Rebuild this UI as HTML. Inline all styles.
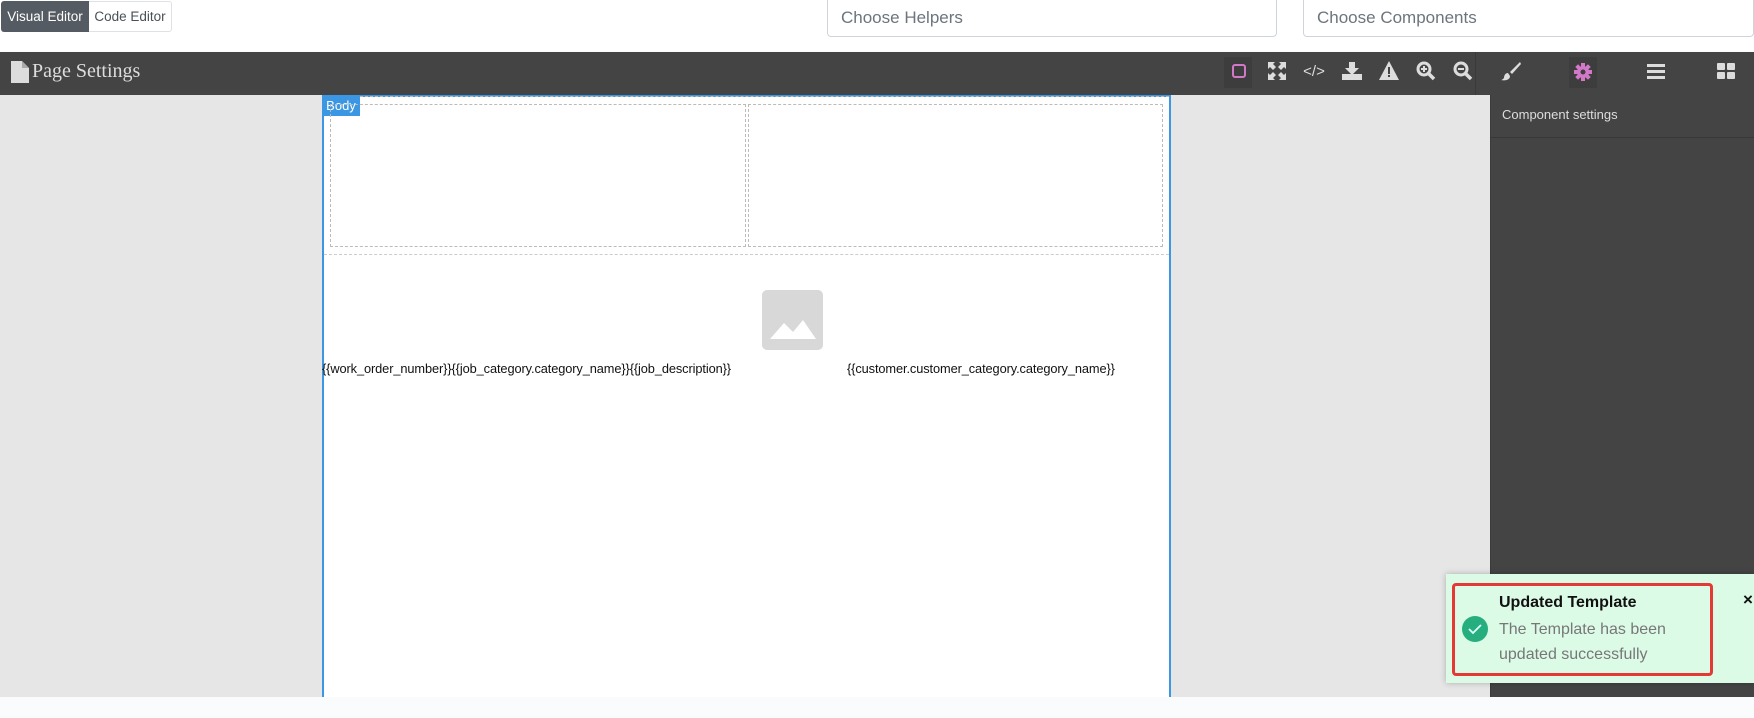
<!DOCTYPE html>
<html><head><style>
*{box-sizing:border-box;margin:0;padding:0}
body{width:1754px;height:718px;background:#fafbfd;position:relative;overflow:hidden;font-family:"Liberation Sans",sans-serif}
.abs{position:absolute;white-space:nowrap}
.top{left:0;top:0;width:1754px;height:51px;background:#fff}
.btn{top:1px;height:31px;font-size:14px;line-height:31px;text-align:center}
.inp{top:0;height:37px;border:1px solid #ced4da;border-top:none;border-radius:0 0 4px 4px;font-size:17px;color:#6c757d;line-height:36px;padding-left:13px;background:#fff}
.ic{color:#ddd;font-size:18px;top:60px;width:26px;text-align:center}
</style></head><body>
<div class="abs top"></div>
<div class="abs btn" style="left:1px;width:88px;background:#545b62;color:#fff;border-radius:3px 0 0 3px;font-size:13.5px">Visual Editor</div>
<div class="abs btn" style="left:89px;width:83px;color:#495057;border:1px solid #dee2e6;border-left:none;border-radius:0 3px 3px 0;line-height:29px;font-size:13.5px">Code Editor</div>
<div class="abs inp" style="left:827px;width:450px">Choose Helpers</div>
<div class="abs inp" style="left:1303px;width:451px">Choose Components</div>

<div class="abs" style="left:0;top:52px;width:1754px;height:43px;background:#444"></div>
<div class="abs" style="left:0;top:95px;width:1490px;height:602px;background:#e6e6e6"></div>
<div class="abs" style="left:1490px;top:95px;width:264px;height:602px;background:#444;border-left:1px solid #3a3a3a"></div>
<div class="abs" style="left:1490px;top:137px;width:264px;height:1px;background:#383838"></div>
<div class="abs" style="left:1502px;top:107px;color:#ddd;font-size:13px">Component settings</div>
<div class="abs" style="left:1475px;top:52px;width:1px;height:43px;background:#3a3a3a"></div>

<svg class="abs" style="left:11px;top:61px" width="18" height="22" viewBox="0 0 18 22"><path d="M0 0H11L18 7V22H0Z" fill="#ddd"/><path d="M11 0V7H18" fill="#aaa"/></svg>
<div class="abs" style="left:32px;top:60px;color:#ddd;font-family:'Liberation Serif',serif;font-size:20px">Page Settings</div>

<div class="abs" style="left:1224px;top:57px;width:28px;height:31px;background:#3d3d3d"></div>
<div class="abs" style="left:1232px;top:64px;width:14px;height:14px;border:2px solid #d278c9;border-radius:3px"></div>
<svg class="abs" style="left:1268px;top:62px" width="18" height="18" viewBox="0 0 18 18"><path d="M0 0h7L5 2l3 3-3 3-3-3-2 2z M18 0v7l-2-2-3 3-3-3 3-3-2-2z M0 18v-7l2 2 3-3 3 3-3 3 2 2z M18 18h-7l2-2-3-3 3-3 3 3 2-2z" fill="#ddd"/></svg>
<div class="abs ic" style="left:1301px;font-size:15px;top:63px">&lt;/&gt;</div>
<svg class="abs" style="left:1342px;top:62px" width="20" height="18"><path d="M7 0h6v6h4l-7 7-7-7h4z M0 12h20v6H0z" fill="#ddd"/></svg>
<svg class="abs" style="left:1379px;top:61px" width="20" height="19"><path d="M10 0L20 19H0Z" fill="#ddd"/><rect x="9" y="6" width="2" height="7" fill="#444"/><rect x="9" y="14" width="2" height="2" fill="#444"/></svg>
<svg class="abs" style="left:1416px;top:61px" width="20" height="20"><circle cx="8" cy="8" r="6" fill="none" stroke="#ddd" stroke-width="3"/><path d="M12 12l6 6" stroke="#ddd" stroke-width="3.5"/><path d="M5 8h6M8 5v6" stroke="#ddd" stroke-width="2"/></svg>
<svg class="abs" style="left:1453px;top:61px" width="20" height="20"><circle cx="8" cy="8" r="6" fill="none" stroke="#ddd" stroke-width="3"/><path d="M12 12l6 6" stroke="#ddd" stroke-width="3.5"/><path d="M5 8h6" stroke="#ddd" stroke-width="2"/></svg>
<svg class="abs" style="left:1501px;top:61px" width="20" height="20"><path d="M19 1L9 11l2 2L20 3z" fill="#ddd"/><path d="M7 12c-3 0-4 3-4 5-1 1-2 2-3 2 4 1 9 0 9-4z" fill="#ddd"/></svg>
<div class="abs" style="left:1569px;top:57px;width:28px;height:31px;background:#3d3d3d"></div>
<svg class="abs" style="left:1574px;top:63px" width="18" height="18" viewBox="0 0 18 18"><g fill="#d278c9"><circle cx="9" cy="9" r="6"/><rect x="7" y="0" width="4" height="18"/><rect x="0" y="7" width="18" height="4"/><rect x="7" y="0" width="4" height="18" transform="rotate(45 9 9)"/><rect x="7" y="0" width="4" height="18" transform="rotate(-45 9 9)"/></g><circle cx="9" cy="9" r="2.5" fill="#3d3d3d"/></svg>
<svg class="abs" style="left:1647px;top:64px" width="18" height="15"><path d="M0 1.5h18M0 7.5h18M0 13.5h18" stroke="#ddd" stroke-width="3"/></svg>
<svg class="abs" style="left:1717px;top:63px" width="18" height="16"><rect x="0" y="0" width="8" height="7" rx="1" fill="#ddd"/><rect x="10" y="0" width="8" height="7" rx="1" fill="#ddd"/><rect x="0" y="9" width="8" height="7" rx="1" fill="#ddd"/><rect x="10" y="9" width="8" height="7" rx="1" fill="#ddd"/></svg>

<div class="abs" style="left:322px;top:95px;width:849px;height:602px;background:#fff;border:2px solid #3b97e3;border-bottom:none"></div>
<div class="abs" style="left:322px;top:96px;width:38px;height:20px;background:#3b97e3;color:#fff;font-size:13px;line-height:20px;text-align:center">Body</div>
<div class="abs" style="left:360px;top:96px;width:809px;border-top:1px dashed #bbb"></div>
<div class="abs" style="left:330px;top:104px;width:416px;height:143px;border:1px dashed #bbb"></div>
<div class="abs" style="left:748px;top:104px;width:415px;height:143px;border:1px dashed #bbb"></div>
<div class="abs" style="left:324px;top:254px;width:845px;border-top:1px dashed #ccc"></div>
<svg class="abs" style="left:762px;top:290px" width="61" height="60"><rect width="61" height="60" rx="5" fill="#d8d8d8"/><path d="M8 49L22 33l9 9 10-12 13 19z" fill="#fff"/></svg>
<div class="abs" style="left:322px;top:361px;font-size:12.8px;color:#111;letter-spacing:-0.1px">{{work_order_number}}{{job_category.category_name}}{{job_description}}</div>
<div class="abs" style="left:847px;top:361px;font-size:12.8px;color:#111;letter-spacing:-0.1px">{{customer.customer_category.category_name}}</div>

<div class="abs" style="left:1446px;top:574px;width:308px;height:109px;background:#dcfbe6;box-shadow:0 0 6px rgba(0,0,0,.25)"></div>
<div class="abs" style="left:1452px;top:583px;width:261px;height:93px;border:3px solid #e53935;border-radius:4px"></div>
<svg class="abs" style="left:1462px;top:616px" width="26" height="26"><circle cx="13" cy="13" r="13" fill="#27ae7e"/><path d="M7 13l4 4 8-8" fill="none" stroke="#dff" stroke-width="1.8"/></svg>
<div class="abs" style="left:1499px;top:594px;font-size:16px;font-weight:bold;color:#111">Updated Template</div>
<div class="abs" style="left:1499px;top:617px;font-size:16px;color:#777;line-height:25px">The Template has been<br>updated successfully</div>
<div class="abs" style="left:1743px;top:590px;font-size:17px;color:#111;font-weight:bold">×</div>
</body></html>
